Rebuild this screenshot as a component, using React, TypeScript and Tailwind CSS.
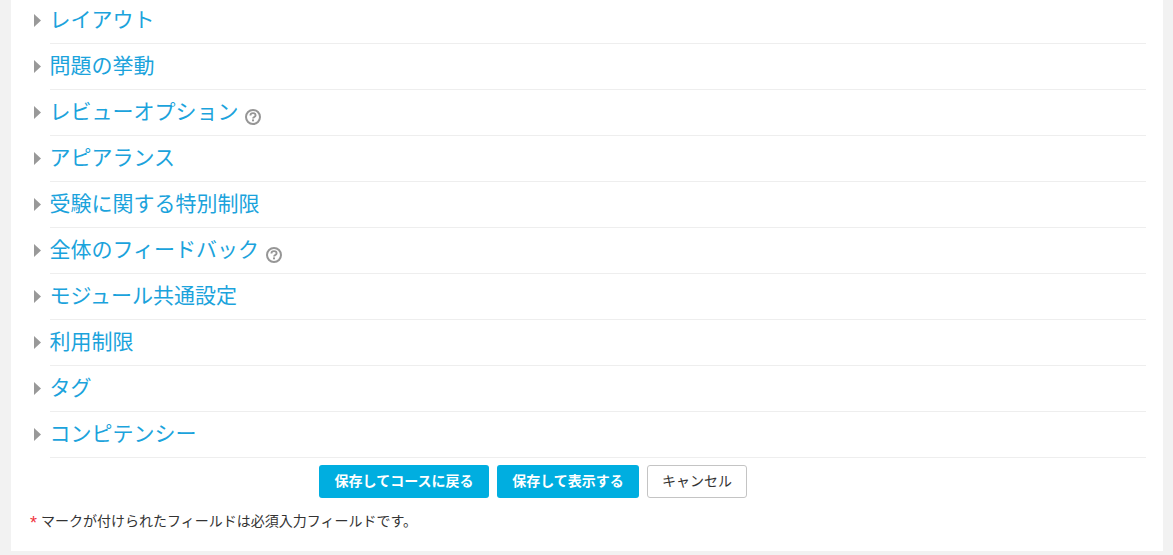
const sections = [
  { title: "レイアウト" },
  { title: "問題の挙動" },
  { title: "レビューオプション", help: true },
  { title: "アピアランス" },
  { title: "受験に関する特別制限" },
  { title: "全体のフィードバック", help: true },
  { title: "モジュール共通設定" },
  { title: "利用制限" },
  { title: "タグ" },
  { title: "コンピテンシー" },
];

const HelpIcon = () => (
  <svg width="16" height="16" viewBox="0 0 16 16" className="ml-[6.5px] mt-[11px] shrink-0">
    <circle cx="8" cy="8" r="7" fill="none" stroke="#969696" strokeWidth="2" />
    <path d="M5.4 6.5c0-1.6 1.1-2.4 2.6-2.4s2.6.9 2.6 2.1c0 1.8-2.5 1.8-2.5 3.3" fill="none" stroke="#969696" strokeWidth="1.9" />
    <rect x="7" y="10.4" width="2" height="1.9" fill="#969696" />
  </svg>
);

const Caret = () => (
  <svg width="7" height="13" viewBox="0 0 7 13" className="ml-[1px] shrink-0">
    <path d="M0 0L7 6.5L0 13Z" fill="#999999" />
  </svg>
);

const App = () => {
  return (
    <div className="h-[555px] overflow-hidden bg-[#f2f2f2] pl-[11px] pr-[10px] font-['Liberation_Sans','Noto_Sans_CJK_JP',sans-serif]">
      <div className="h-[551px] bg-white pl-[22px] pr-[17px]">
        {sections.map((s, i) => (
          <div key={s.title} className="flex">
            <div className={"flex w-[17px] items-center " + (i === 0 ? "pb-[4px]" : "pb-[2px]")}>
              <Caret />
            </div>
            <div
              className={
                "flex flex-1 items-center border-b border-[#eeeeee] " +
                (i === 0 ? "h-[44px] pb-[4px]" : "h-[46px] pb-[2px]")
              }
            >
              <span className="-ml-[0.5px] text-[21px] leading-[30px] text-[#1ba3dc]">{s.title}</span>
              {s.help && <HelpIcon />}
            </div>
          </div>
        ))}
        <div className="mt-[7px] flex gap-2 pl-[286px]">
          <button className="h-[33px] w-[170px] rounded-[3px] bg-[#00aee0] text-[14px] font-bold text-white">
            保存してコースに戻る
          </button>
          <button className="h-[33px] w-[142px] rounded-[3px] bg-[#00aee0] text-[14px] font-bold text-white">
            保存して表示する
          </button>
          <button className="h-[33px] w-[100px] rounded-[3px] border border-[#c4c4c4] bg-white text-[14px] text-[#333333]">
            キャンセル
          </button>
        </div>
        <div className="mt-[14px] flex items-start text-[14px] leading-[18px] text-[#333333]">
          <span className="-ml-[3px] mr-[4px] w-[7px] pt-[2px] text-[18px] leading-[18px] text-[#f0323c]">*</span>
          <span>マークが付けられたフィールドは必須入力フィールドです。</span>
        </div>
      </div>
    </div>
  );
};

export default App;
